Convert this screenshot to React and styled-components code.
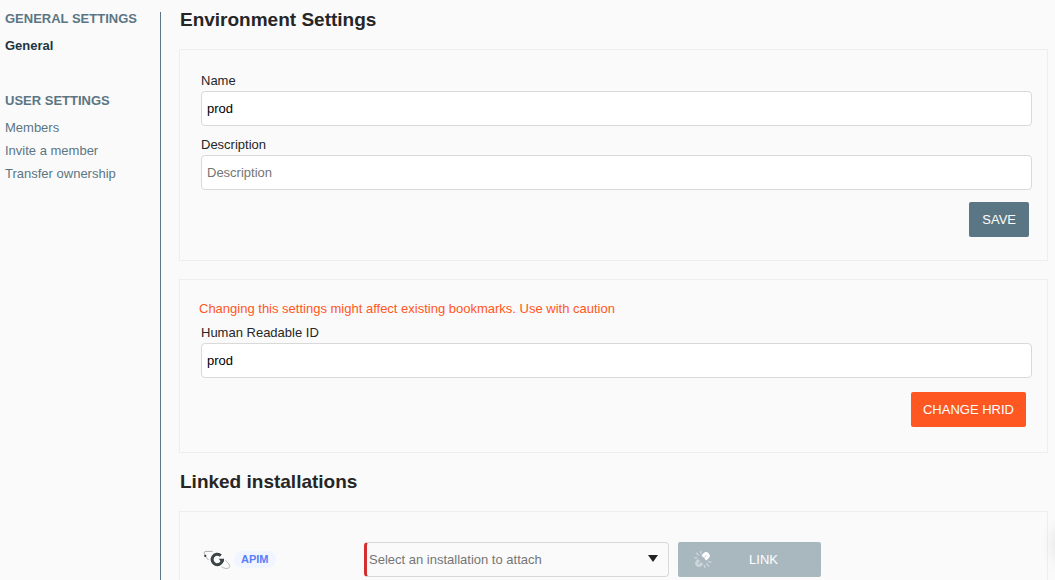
import React from "react";
import styled, { createGlobalStyle } from "styled-components";

const GlobalStyle = createGlobalStyle`
  *, *::before, *::after { box-sizing: border-box; }
  body {
    margin: 0;
    background: #fafafa;
    color: #262626;
    font: 13px/16px Arial, "Liberation Sans", sans-serif;
  }
`;

const Page = styled.div`
  position: relative;
  display: flex;
  height: 100vh;
  overflow: hidden;
`;

const Sidebar = styled.nav`
  flex: none;
  width: 161px;
  margin-top: 12px;
  padding-left: 5px;
  border-right: 1px solid #5a7684;
`;

const NavGroup = styled.section`
  margin-bottom: 37px;
`;

const NavTitle = styled.h2`
  margin: 0 0 8px;
  font-size: 13px;
  line-height: 14px;
  font-weight: bold;
  color: #5a7684;
  text-transform: uppercase;
`;

const NavLink = styled.a`
  display: block;
  line-height: 23px;
  color: ${(p) => (p.$active ? "#1d3540" : "#5a7684")};
  font-weight: ${(p) => (p.$active ? "bold" : "normal")};
  text-decoration: none;
`;

const Content = styled.main`
  flex: 1;
  min-width: 0;
  padding: 9px 7px 0 18px;
`;

const Heading = styled.h1`
  margin: 0 0 18px 1px;
  font-size: 19px;
  line-height: 22px;
  font-weight: bold;
`;

const Panel = styled.section`
  margin-bottom: 18px;
  padding: 23px 15px 23px 21px;
  border: 1px solid #eee;
`;

const Field = styled.div`
  display: flex;
  flex-direction: column;
  gap: 2px;
  margin-bottom: 11px;
`;

const Label = styled.label`
  line-height: 16px;
`;

const TextInput = styled.input`
  width: 100%;
  height: 35px;
  padding: 0 5px 1px;
  border: 1px solid #d9d9d9;
  border-radius: 4px;
  background: #fff;
  color: #000;
  font: inherit;
  outline: none;
  &::placeholder { color: #757575; opacity: 1; }
`;

const Actions = styled.div`
  display: flex;
  justify-content: flex-end;
  padding: ${(p) => (p.$spaced ? "3px 6px 2px 0" : "1px 3px 0 0")};
`;

const Button = styled.button`
  height: 35px;
  padding: 0 ${(p) => (p.$danger ? "12px" : "13px")};
  border: 0;
  border-radius: 2px;
  background: ${(p) => (p.$danger ? "#ff5722" : "#5a7684")};
  color: #fff;
  font: inherit;
  text-transform: uppercase;
`;

const Warning = styled.p`
  margin: -2px 0 8px -2px;
  line-height: 16px;
  color: #ff5722;
`;

const InstallRow = styled.div`
  display: flex;
  align-items: center;
  padding: 7px 0 20px 2px;
`;

const Product = styled.div`
  display: flex;
  align-items: center;
  gap: 3px;
  width: 161px;
`;

const Badge = styled.span`
  padding: 0 7px;
  border-radius: 9px;
  background: #f0f5ff;
  color: #597ef7;
  font-size: 11px;
  line-height: 17px;
  font-weight: bold;
`;

const SelectWrap = styled.div`
  position: relative;
  flex: none;
  width: 305px;
  margin-right: 9px;
`;

const Select = styled.select`
  appearance: none;
  width: 100%;
  height: 35px;
  padding: 0 28px 0 2px;
  border: 1px solid #d9d9d9;
  border-left: 3px solid #d32f2f;
  border-radius: 4px;
  background: transparent;
  color: #757575;
  font: inherit;
  outline: none;
`;

const Caret = styled.svg`
  position: absolute;
  top: 13px;
  right: 11px;
  pointer-events: none;
`;

const LinkButton = styled(Button)`
  display: flex;
  align-items: center;
  width: 143px;
  padding: 0 16px;
  background: #a9b8bf;
  svg { flex: none; }
  span { flex: 1; padding-left: 10px; text-align: center; }
`;

const DrawerHandle = styled.div`
  position: absolute;
  top: 523px;
  right: -42px;
  width: 40px;
  height: 40px;
  border-radius: 50%;
  box-shadow: 0 1px 18px rgba(0, 0, 0, 0.16);
`;

function ProductLogo() {
  return (
    <svg width="28" height="20" viewBox="0 0 28 20" fill="none" aria-hidden="true">
      <path d="M9.5 1.4H3Q.8 1.4 1.2 3.2Q1.7 6.5 5.5 10" stroke="#8c8c8c" strokeWidth="0.7" />
      <circle cx="2.3" cy="5.9" r="1.1" fill="#30383c" />
      <path d="M17.8 5.6A5.2 5.2 0 1 0 19.4 10.4" stroke="#3b4347" strokeWidth="3" />
      <path d="M15.8 8.8H21V11.6H17.8Z" fill="#3b4347" />
      <path d="M22.5 10.4Q27 14 26.7 16.7Q26.4 18.8 23 18.5Q20 18 18.5 16.8" stroke="#aaa" strokeWidth="0.8" />
    </svg>
  );
}

function BrokenLinkIcon() {
  return (
    <svg width="18" height="19" viewBox="0 0 18 19" fill="none" aria-hidden="true">
      <path d="M8.8 6.8L10.6 4.4Q12.1 3 13.5 4.3Q14.8 5.8 13.5 7.2L11.2 9.2" stroke="#fff" strokeWidth="3.2" />
      <path d="M4.9 9.9L3.2 11.8Q2 13.4 3.3 14.8Q4.8 16.1 6.4 14.8L8.2 13.2" stroke="#cbd5da" strokeWidth="3" />
      <path d="M6.5 .8L7.2 3.8M2.2 2.8L4.8 5.4M0 7.6L3.4 8.2M14 11.6L17.4 12.3M12.2 13.6L15.2 16.4M10.2 14.8L11 18.2" stroke="#cbd5da" strokeWidth="1.3" />
    </svg>
  );
}

export default function App() {
  return (
    <>
      <GlobalStyle />
      <Page>
        <Sidebar>
          <NavGroup>
            <NavTitle>General settings</NavTitle>
            <NavLink href="#general" $active>General</NavLink>
          </NavGroup>
          <NavGroup>
            <NavTitle>User settings</NavTitle>
            <NavLink href="#members">Members</NavLink>
            <NavLink href="#invite">Invite a member</NavLink>
            <NavLink href="#transfer">Transfer ownership</NavLink>
          </NavGroup>
        </Sidebar>
        <Content>
          <Heading>Environment Settings</Heading>
          <Panel>
            <Field>
              <Label htmlFor="name">Name</Label>
              <TextInput id="name" defaultValue="prod" />
            </Field>
            <Field>
              <Label htmlFor="description">Description</Label>
              <TextInput id="description" placeholder="Description" />
            </Field>
            <Actions>
              <Button type="button">Save</Button>
            </Actions>
          </Panel>
          <Panel>
            <Warning>Changing this settings might affect existing bookmarks. Use with caution</Warning>
            <Field>
              <Label htmlFor="hrid">Human Readable ID</Label>
              <TextInput id="hrid" defaultValue="prod" />
            </Field>
            <Actions $spaced>
              <Button type="button" $danger>Change HRID</Button>
            </Actions>
          </Panel>
          <Heading as="h2">Linked installations</Heading>
          <Panel>
            <InstallRow>
              <Product>
                <ProductLogo />
                <Badge>APIM</Badge>
              </Product>
              <SelectWrap>
                <Select aria-label="Installation" defaultValue="">
                  <option value="">Select an installation to attach</option>
                </Select>
                <Caret width="10" height="8" viewBox="0 0 10 8" aria-hidden="true">
                  <path d="M0 0H10L5 7Z" fill="#222" />
                </Caret>
              </SelectWrap>
              <LinkButton type="button">
                <BrokenLinkIcon />
                <span>Link</span>
              </LinkButton>
            </InstallRow>
          </Panel>
        </Content>
        <DrawerHandle />
      </Page>
    </>
  );
}
